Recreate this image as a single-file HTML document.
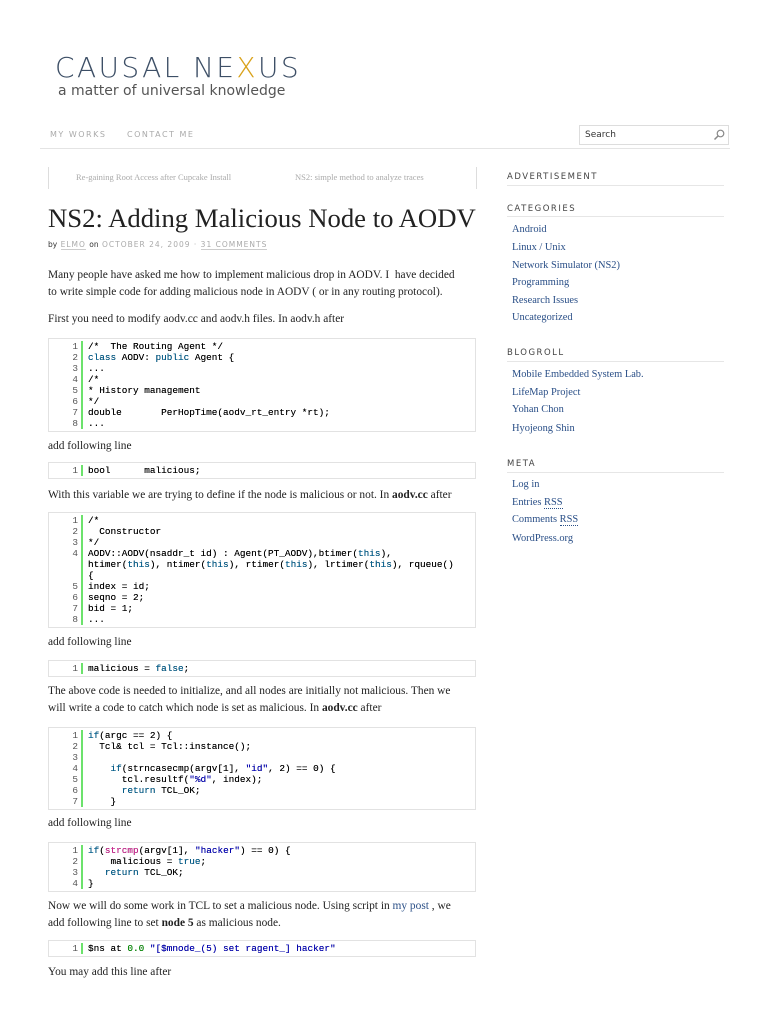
<!DOCTYPE html>
<html><head><meta charset="utf-8"><style>
*{margin:0;padding:0;box-sizing:border-box}
body{width:768px;height:1024px;background:#fff;position:relative;overflow:hidden;font-family:"Liberation Serif",serif;color:#222}
.a{position:absolute;white-space:nowrap}
.t{font-size:11.4px;line-height:17px;left:48px}
.logo{left:55px;top:51px;font-family:"DejaVu Sans",sans-serif;font-size:28px;letter-spacing:2.4px;color:#3d4f66;font-weight:300}
.tag{left:58px;top:83px;font-family:"DejaVu Sans",sans-serif;font-size:14px;color:#555}
.nav{top:130px;font-family:"DejaVu Sans",sans-serif;font-size:8px;letter-spacing:1.5px;color:#aaa}
.code{position:absolute;left:48px;width:428px;border:1px solid #e2e2e2;background:#fff;font-family:"Liberation Mono",monospace;font-size:9.4px;line-height:11px;padding:2px 0}
.code .r{display:flex;height:11px}
.code .n{width:34px;text-align:right;padding-right:3px;color:#555;border-right:2px solid #6ce26c;flex:none}
.code .c{padding-left:5px;white-space:pre;color:#000;font-weight:bold;-webkit-text-stroke:0}
.code .c{font-weight:normal;text-shadow:0 0 0.3px #000}
.k{color:#069}.cm{color:#080}.s{color:#00c}.g{color:#090}.p{color:#e0249b}
.sh{font-family:"DejaVu Sans",sans-serif;font-size:8.5px;letter-spacing:1.5px;color:#444;left:507px}
.hr{position:absolute;left:507px;width:217px;height:1px;background:#e6e6e6}
.sl{left:512px;font-size:10.4px;color:#2a4f87}
</style></head><body>
<div class="a logo">CAUSAL NE<span style="color:#d9a21b">X</span>US</div>
<div class="a tag">a matter of universal knowledge</div>
<div class="a nav" style="left:50px">MY WORKS</div>
<div class="a nav" style="left:127px">CONTACT ME</div>
<div style="position:absolute;left:579px;top:125px;width:150px;height:20px;border:1px solid #ddd;font-family:'DejaVu Sans',sans-serif;font-size:9px;padding:4px 5px;color:#333">Search<svg style="position:absolute;right:3px;top:3px" width="12" height="12" viewBox="0 0 12 12"><circle cx="7.5" cy="4.5" r="3.3" fill="none" stroke="#888" stroke-width="1.2"/><path d="M5 7 L1.5 10.5" stroke="#888" stroke-width="1.5"/></svg></div>
<div style="position:absolute;left:40px;top:148px;width:690px;height:1px;background:#e4e4e4"></div>
<div style="position:absolute;left:48px;top:167px;width:1px;height:22px;background:#ddd"></div>
<div style="position:absolute;left:476px;top:167px;width:1px;height:22px;background:#ddd"></div>
<div class="a" style="left:76px;top:172px;font-size:8.5px;color:#aaa">Re-gaining Root Access after Cupcake Install</div>
<div class="a" style="left:295px;top:172px;font-size:8.5px;color:#aaa">NS2: simple method to analyze traces</div>
<div class="a" style="left:48px;top:203px;font-size:26.7px;color:#222">NS2: Adding Malicious Node to AODV</div>
<div class="a" style="left:48px;top:240px;font-family:'DejaVu Sans',sans-serif;font-size:7.5px;letter-spacing:1px;color:#aaa"><span style="color:#333;letter-spacing:0">by</span> <span style="border-bottom:1px solid #ccc">ELMO</span> <span style="color:#333;letter-spacing:0">on</span> OCTOBER 24, 2009 · <span style="border-bottom:1px solid #ccc">31 COMMENTS</span></div>
<div class="a t" style="top:267px">Many people have asked me how to implement malicious drop in AODV. I &nbsp;have decided<br>to write simple code for adding malicious node in AODV ( or in any routing protocol).</div>
<div class="a t" style="top:311px">First you need to modify aodv.cc and aodv.h files. In aodv.h after</div>
<div class="code" style="top:338px">
<div class="r"><span class="n">1</span><span class="c cm">/*  The Routing Agent */</span></div>
<div class="r"><span class="n">2</span><span class="c"><span class="k">class</span> AODV: <span class="k">public</span> Agent {</span></div>
<div class="r"><span class="n">3</span><span class="c">...</span></div>
<div class="r"><span class="n">4</span><span class="c cm">/*</span></div>
<div class="r"><span class="n">5</span><span class="c cm">* History management</span></div>
<div class="r"><span class="n">6</span><span class="c cm">*/</span></div>
<div class="r"><span class="n">7</span><span class="c">double       PerHopTime(aodv_rt_entry *rt);</span></div>
<div class="r"><span class="n">8</span><span class="c">...</span></div>
</div>
<div class="a t" style="top:438px">add following line</div>
<div class="code" style="top:462px"><div class="r"><span class="n">1</span><span class="c">bool      malicious;</span></div></div>
<div class="a t" style="top:487px">With this variable we are trying to define if the node is malicious or not. In <b>aodv.cc</b> after</div>
<div class="code" style="top:512px">
<div class="r"><span class="n">1</span><span class="c cm">/*</span></div>
<div class="r"><span class="n">2</span><span class="c cm">  Constructor</span></div>
<div class="r"><span class="n">3</span><span class="c cm">*/</span></div>
<div class="r"><span class="n">4</span><span class="c">AODV::AODV(nsaddr_t id) : Agent(PT_AODV),btimer(<span class="k">this</span>),</span></div>
<div class="r"><span class="n"></span><span class="c">htimer(<span class="k">this</span>), ntimer(<span class="k">this</span>), rtimer(<span class="k">this</span>), lrtimer(<span class="k">this</span>), rqueue()</span></div>
<div class="r"><span class="n"></span><span class="c">{</span></div>
<div class="r"><span class="n">5</span><span class="c">index = id;</span></div>
<div class="r"><span class="n">6</span><span class="c">seqno = 2;</span></div>
<div class="r"><span class="n">7</span><span class="c">bid = 1;</span></div>
<div class="r"><span class="n">8</span><span class="c">...</span></div>
</div>
<div class="a t" style="top:634px">add following line</div>
<div class="code" style="top:660px"><div class="r"><span class="n">1</span><span class="c">malicious = <span class="k">false</span>;</span></div></div>
<div class="a t" style="top:683px">The above code is needed to initialize, and all nodes are initially not malicious. Then we<br>will write a code to catch which node is set as malicious. In <b>aodv.cc</b> after</div>
<div class="code" style="top:727px">
<div class="r"><span class="n">1</span><span class="c"><span class="k">if</span>(argc == 2) {</span></div>
<div class="r"><span class="n">2</span><span class="c">  Tcl&amp; tcl = Tcl::instance();</span></div>
<div class="r"><span class="n">3</span><span class="c"></span></div>
<div class="r"><span class="n">4</span><span class="c">    <span class="k">if</span>(strncasecmp(argv[1], <span class="s">"id"</span>, 2) == 0) {</span></div>
<div class="r"><span class="n">5</span><span class="c">      tcl.resultf(<span class="s">"%d"</span>, index);</span></div>
<div class="r"><span class="n">6</span><span class="c">      <span class="k">return</span> TCL_OK;</span></div>
<div class="r"><span class="n">7</span><span class="c">    }</span></div>
</div>
<div class="a t" style="top:815px">add following line</div>
<div class="code" style="top:842px">
<div class="r"><span class="n">1</span><span class="c"><span class="k">if</span>(<span class="p">strcmp</span>(argv[1], <span class="s">"hacker"</span>) == 0) {</span></div>
<div class="r"><span class="n">2</span><span class="c">    malicious = <span class="k">true</span>;</span></div>
<div class="r"><span class="n">3</span><span class="c">   <span class="k">return</span> TCL_OK;</span></div>
<div class="r"><span class="n">4</span><span class="c">}</span></div>
</div>
<div class="a t" style="top:898px">Now we will do some work in TCL to set a malicious node. Using script in <span style="color:#2a4f87">my post</span> , we<br>add following line to set <b>node 5</b> as malicious node.</div>
<div class="code" style="top:940px"><div class="r"><span class="n">1</span><span class="c">$ns at <span class="g">0.0</span> <span class="s">"[$mnode_(5) set ragent_] hacker"</span></span></div></div>
<div class="a t" style="top:964px">You may add this line after</div>

<div class="a sh" style="top:172px">ADVERTISEMENT</div><div class="hr" style="top:185px"></div>
<div class="a sh" style="top:204px">CATEGORIES</div><div class="hr" style="top:216px"></div>
<div class="a sl" style="top:224px">Android</div>
<div class="a sl" style="top:242px">Linux / Unix</div>
<div class="a sl" style="top:260px">Network Simulator (NS2)</div>
<div class="a sl" style="top:277px">Programming</div>
<div class="a sl" style="top:295px">Research Issues</div>
<div class="a sl" style="top:312px">Uncategorized</div>
<div class="a sh" style="top:348px">BLOGROLL</div><div class="hr" style="top:361px"></div>
<div class="a sl" style="top:369px">Mobile Embedded System Lab.</div>
<div class="a sl" style="top:387px">LifeMap Project</div>
<div class="a sl" style="top:404px">Yohan Chon</div>
<div class="a sl" style="top:423px">Hyojeong Shin</div>
<div class="a sh" style="top:459px">META</div><div class="hr" style="top:472px"></div>
<div class="a sl" style="top:479px">Log in</div>
<div class="a sl" style="top:497px">Entries <span style="border-bottom:1px dotted #2a4f87">RSS</span></div>
<div class="a sl" style="top:514px">Comments <span style="border-bottom:1px dotted #2a4f87">RSS</span></div>
<div class="a sl" style="top:533px">WordPress.org</div>
</body></html>
